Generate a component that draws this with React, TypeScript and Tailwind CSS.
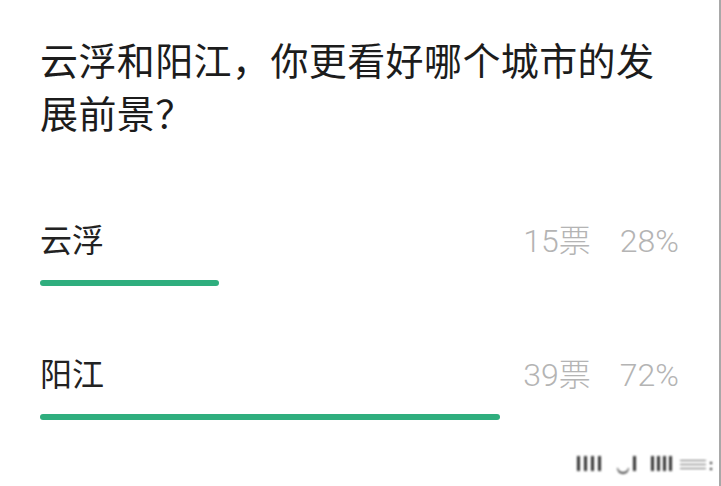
const options = [
  { name: '云浮', votes: 15, pct: 28 },
  { name: '阳江', votes: 39, pct: 72 },
];

function Watermark() {
  return (
    <div className="absolute left-[577px] top-[456px] flex items-end gap-[4px] blur-[0.8px]">
      <div className="flex gap-[4px]">
        <div className="w-[3px] h-[15px] bg-[#333]" />
        <div className="w-[3px] h-[15px] bg-[#333]" />
        <div className="w-[3px] h-[15px] bg-[#333]" />
        <div className="w-[3px] h-[15px] bg-[#333]" />
      </div>
      <div className="ml-[12px] w-[12px] h-[6px] mb-[-3px] rounded-b-full border-b-2 border-x border-[#444]" />
      <div className="w-[3px] h-[15px] bg-[#333]" />
      <div className="ml-[11px] flex gap-[3px]">
        <div className="w-[3px] h-[15px] bg-[#333]" />
        <div className="w-[3px] h-[15px] bg-[#333]" />
        <div className="w-[3px] h-[15px] bg-[#333]" />
        <div className="w-[3px] h-[15px] bg-[#333]" />
      </div>
      <div className="ml-[4px] flex flex-col gap-[3px] pb-[2px]">
        <div className="w-[26px] h-[1px] bg-[#666]" />
        <div className="w-[26px] h-[1px] bg-[#666]" />
        <div className="w-[26px] h-[1px] bg-[#666]" />
      </div>
      <div className="flex flex-col gap-[4px] pb-[1px]">
        <div className="w-[2px] h-[2px] bg-[#111]" />
        <div className="w-[2px] h-[2px] bg-[#111]" />
      </div>
    </div>
  );
}

export default function App() {
  return (
    <div
      className="relative w-[721px] h-[486px] overflow-hidden bg-white border-r-2 border-[#a8a8a8] pl-[40px] pr-[40px] pt-[36px]"
      style={{ fontFamily: 'Roboto, "Noto Sans CJK SC", sans-serif' }}
    >
      <h1 className="text-[38px] leading-[53px] tracking-[0.4px] text-[#1c1c1c] font-normal">
        云浮和阳江，你更看好哪个城市的发展前景？
      </h1>

      <div className="mt-[79px] flex flex-col gap-[69px]">
        {options.map((o) => (
          <div key={o.name}>
            <div className="flex items-center justify-between h-[40px]">
              <span className="text-[32px] text-[#222]">{o.name}</span>
              <div className="flex items-center gap-[29px] text-[32px] font-light text-[#b4b4b4]">
                <span>{o.votes}票</span>
                <span>{o.pct}%</span>
              </div>
            </div>
            <div className="mt-[19px] h-[6px] w-full">
              <div
                className="h-full rounded-full bg-[#2fae7e]"
                style={{ width: `${o.pct}%` }}
              />
            </div>
          </div>
        ))}
      </div>

      <Watermark />
    </div>
  );
}
